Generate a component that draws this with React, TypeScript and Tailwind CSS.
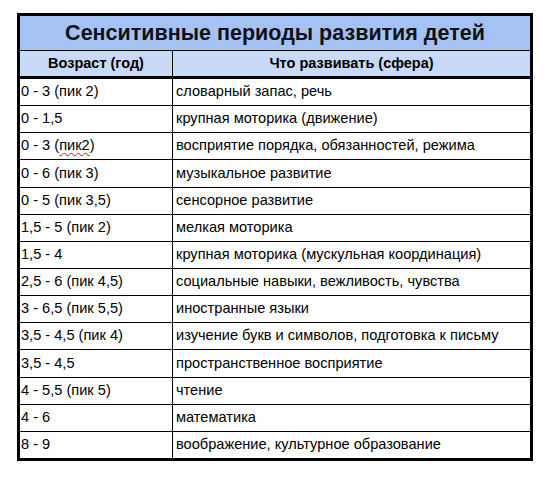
import React from "react";

const rows: [React.ReactNode, string][] = [
  ["0 - 3 (пик 2)", "словарный запас, речь"],
  ["0 - 1,5", "крупная моторика (движение)"],
  [
    <>
      0 - 3 (<span className="underline decoration-wavy decoration-red-600 decoration-1 underline-offset-2">пик2</span>)
    </>,
    "восприятие порядка, обязанностей, режима",
  ],
  ["0 - 6 (пик 3)", "музыкальное развитие"],
  ["0 - 5 (пик 3,5)", "сенсорное развитие"],
  ["1,5 - 5 (пик 2)", "мелкая моторика"],
  ["1,5 - 4", "крупная моторика (мускульная координация)"],
  ["2,5 - 6 (пик 4,5)", "социальные навыки, вежливость, чувства"],
  ["3 - 6,5 (пик 5,5)", "иностранные языки"],
  ["3,5 - 4,5 (пик 4)", "изучение букв и символов, подготовка к письму"],
  ["3,5 - 4,5", "пространственное восприятие"],
  ["4 - 5,5 (пик 5)", "чтение"],
  ["4 - 6", "математика"],
  ["8 - 9", "воображение, культурное образование"],
];

export default function App() {
  return (
    <div className="w-[550px] h-[480px] bg-white pt-[13px] pl-[17px]" style={{ fontFamily: '"Liberation Sans", Arial, sans-serif' }}>
      <div className="w-[516px] h-[448px] border-[3px] border-black flex flex-col text-black">
        <div className="h-[35px] shrink-0 bg-[#a4c2f4] border-b border-black flex items-center justify-center text-[21.5px] font-bold text-[#111]">
          Сенситивные периоды развития детей
        </div>
        <div className="h-[28px] shrink-0 bg-[#c9daf8] border-b-[3px] border-black flex text-[14.5px] font-bold">
          <div className="w-[153px] shrink-0 border-r border-black flex items-center justify-center">Возраст (год)</div>
          <div className="flex-1 flex items-center justify-center">Что развивать (сфера)</div>
        </div>
        <div className="flex-1 flex flex-col">
          {rows.map((r, i) => (
            <div key={i} className={`flex-1 flex text-[14.6px] ${i < rows.length - 1 ? "border-b border-black" : ""}`}>
              <div className="w-[153px] shrink-0 border-r border-black flex items-center pl-[1px]">{r[0]}</div>
              <div className="flex-1 flex items-center pl-[3px]">{r[1]}</div>
            </div>
          ))}
        </div>
      </div>
    </div>
  );
}
